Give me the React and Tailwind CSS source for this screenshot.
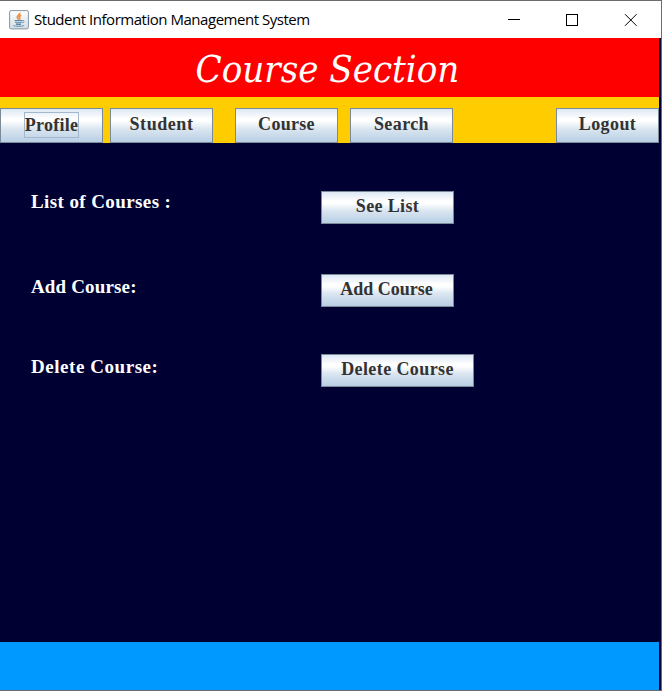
const face =
  'border border-[#7a8a99] bg-[linear-gradient(180deg,#dde8f3_0%,#ffffff_30%,#ffffff_36%,#dbe6f1_60%,#b8cfe5_100%)] flex items-center justify-center font-["Liberation_Serif",serif] font-bold text-[18px] leading-none text-[#333333] whitespace-nowrap shrink-0';

function NavButton({ children, className = 'tracking-[0.4px]' }) {
  return <button className={`${face} h-[35px] w-[103px] pb-[3px] ${className}`}>{children}</button>;
}

function Row({ label, action, className, labelClass, buttonClass }) {
  return (
    <div className={`flex h-[33px] ${className}`}>
      <div className={`w-[290px] font-["Liberation_Serif",serif] text-[19px] font-bold leading-[20px] text-white whitespace-nowrap ${labelClass}`}>
        <span>{label}</span>
      </div>
      <button className={`${face} h-[33px] pb-[3px] ${buttonClass}`}>{action}</button>
    </div>
  );
}

function JavaIcon() {
  return (
    <svg width="20" height="20" viewBox="0 0 20 20" fill="none">
      <defs>
        <linearGradient id="tile" x1="0" y1="0" x2="0" y2="1">
          <stop offset="0" stopColor="#ffffff" />
          <stop offset="1" stopColor="#d3dde4" />
        </linearGradient>
      </defs>
      <rect x="0.6" y="0.6" width="18.8" height="18.3" rx="1.5" fill="url(#tile)" stroke="#8397a6" />
      <path d="M10.8 2.8c.7 2-3.2 2.8-2.5 4.8.2.7 1 1.2 1.2 2M12.3 5.3c-2 .8-2.4 1.6-1.7 2.5.5.7.2 1.2-.3 1.7" stroke="#ee9147" strokeWidth="1.7" />
      <path d="M5.6 10.6h7.6M6.2 12.3c1.8.7 4.5.7 6.3 0M7 14.1c1.5.6 3.6.6 5 0" stroke="#5d88aa" strokeWidth="1.2" />
      <path d="M13.2 10.6c2.7-.6 2.4 1.8-.3 2.4M4.3 15.5c2.2 1.2 8.4 1.2 10.8 0" stroke="#6b92b0" />
    </svg>
  );
}

export default function App() {
  return (
    <div className="flex h-[691px] w-[662px] flex-col overflow-hidden border-t border-r border-b border-[#6b6b70] bg-[#000033]">
      <header className="flex h-[37px] shrink-0 items-center bg-white pl-[9px]">
        <JavaIcon />
        <span className='ml-[5px] w-[300px] font-["Open_Sans",sans-serif] text-[15px] tracking-[-0.47px] leading-none text-black whitespace-nowrap'>
          Student Information Management System
        </span>
        <svg className="ml-auto" width="154" height="14" viewBox="0 0 154 14" stroke="#000" fill="none">
          <path d="M1 6.5h12" />
          <rect x="59.5" y="1.5" width="11" height="11" />
          <path d="M118 1.2l11.6 11.6M129.6 1.2L118 12.8" />
        </svg>
      </header>
      <div className="flex h-[59px] w-[659px] shrink-0 items-center justify-center bg-[#ff0000]">
        <h1 className='pr-1 pt-[3px] font-["DejaVu_Serif_Condensed","DejaVu_Serif",serif] text-[38px] italic leading-none text-white whitespace-nowrap [font-stretch:condensed]'>
          Course Section
        </h1>
      </div>
      <nav className="flex h-[46px] w-[659px] shrink-0 items-end bg-[#ffcc00]">
        <NavButton className="tracking-[0.3px]">
          <span className="mt-px flex h-[26px] w-[55px] items-center justify-center border border-[#a3b8cc]">Profile</span>
        </NavButton>
        <NavButton className="ml-[7px] tracking-[0.55px]">Student</NavButton>
        <NavButton className="ml-[22px] tracking-[0.3px]">Course</NavButton>
        <NavButton className="ml-3 tracking-[0.4px]">Search</NavButton>
        <NavButton className="ml-auto tracking-[0.4px]">Logout</NavButton>
      </nav>
      <main className="flex-1 pl-[31px] pt-12">
        <Row label="List of Courses :" action="See List" className="" labelClass="pt-px tracking-[0.4px]" buttonClass="w-[133px] tracking-[0.35px]" />
        <Row label="Add Course:" action="Add Course" className="mt-[50px]" labelClass="pt-[3px] tracking-[0.15px]" buttonClass="w-[133px] pr-0.5" />
        <Row label="Delete Course:" action="Delete Course" className="mt-[47px]" labelClass="pt-[3px] tracking-[0.55px]" buttonClass="w-[153px] tracking-[0.4px]" />
      </main>
      <footer className="h-12 w-[659px] shrink-0 bg-[#0099ff]" />
    </div>
  );
}
